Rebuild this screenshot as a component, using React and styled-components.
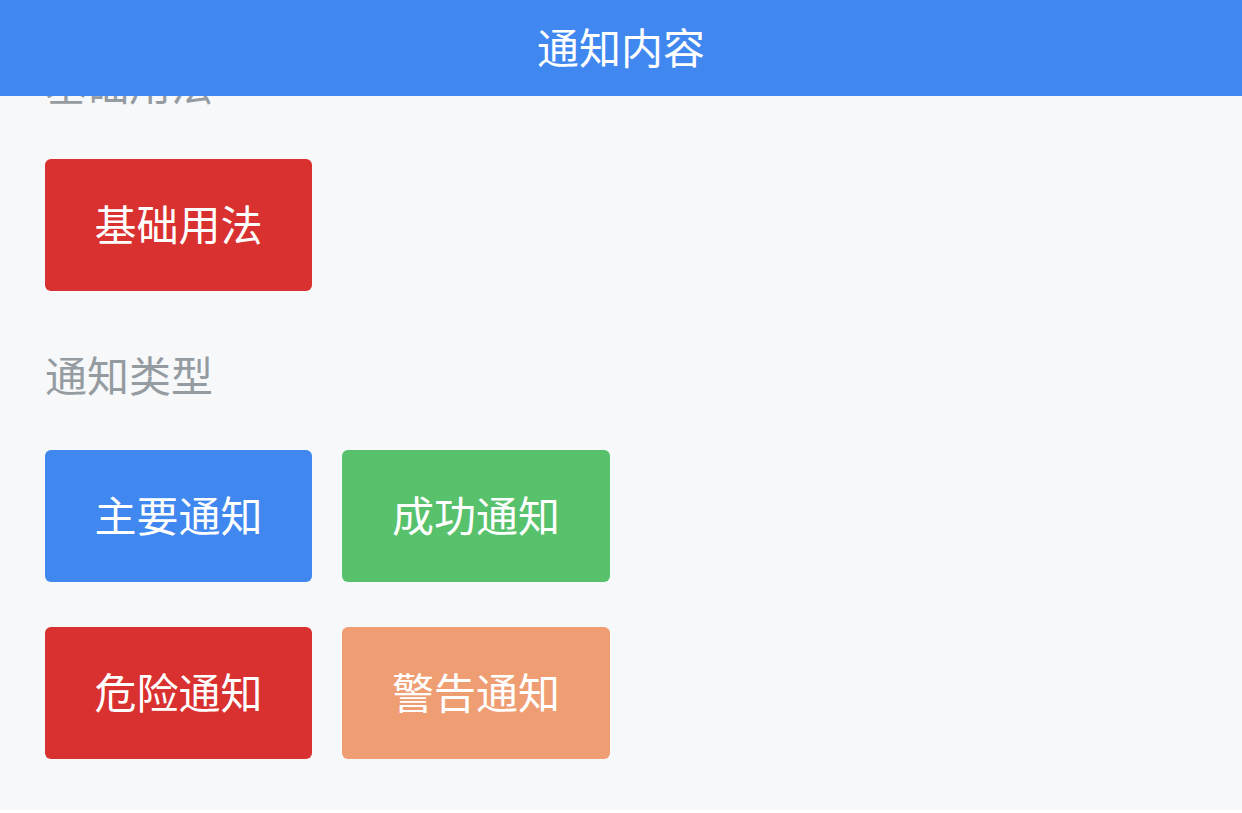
import React from "react";
import styled, { createGlobalStyle } from "styled-components";

const GlobalStyle = createGlobalStyle`
  body {
    margin: 0;
    background: #ffffff;
    font-family: "Noto Sans CJK SC", "Noto Sans", sans-serif;
  }
`;

const NavBar = styled.header`
  position: fixed;
  top: 0;
  left: 0;
  right: 0;
  z-index: 10;
  height: 96px;
  box-sizing: border-box;
  padding-bottom: 5px;
  display: flex;
  align-items: center;
  justify-content: center;
  background: #4088f0;
  color: #ffffff;
  font-size: 42px;
`;

const Page = styled.main`
  height: 810px;
  box-sizing: border-box;
  padding: 0 45px;
  background: #f7f8fa;
  overflow: hidden;
`;

const Section = styled.section`
  padding-top: 54px;
`;

const Title = styled.h2`
  margin: 0 0 47px;
  font-size: 42px;
  font-weight: 400;
  line-height: 58px;
  color: #959ca1;
`;

const ButtonGrid = styled.div`
  display: grid;
  grid-template-columns: 267px 268px;
  gap: 45px 30px;
`;

const colors = {
  primary: "#4088f0",
  success: "#58c16c",
  danger: "#d93030",
  warning: "#ef9d73",
};

const Button = styled.button`
  height: 132px;
  padding: 0 0 6px;
  border: none;
  border-radius: 6px;
  background: ${(p) => colors[p.$type]};
  color: #ffffff;
  font-family: inherit;
  font-size: 42px;
  cursor: pointer;
`;

const sections = [
  { title: "基础用法", buttons: [{ type: "danger", label: "基础用法" }] },
  {
    title: "通知类型",
    buttons: [
      { type: "primary", label: "主要通知" },
      { type: "success", label: "成功通知" },
      { type: "danger", label: "危险通知" },
      { type: "warning", label: "警告通知" },
    ],
  },
];

const App = () => {
  return (
    <>
      <GlobalStyle />
      <NavBar>通知内容</NavBar>
      <Page>
        {sections.map((s) => (
          <Section key={s.title}>
            <Title>{s.title}</Title>
            <ButtonGrid>
              {s.buttons.map((b) => (
                <Button key={b.label} $type={b.type}>
                  {b.label}
                </Button>
              ))}
            </ButtonGrid>
          </Section>
        ))}
      </Page>
    </>
  );
};

export default App;
